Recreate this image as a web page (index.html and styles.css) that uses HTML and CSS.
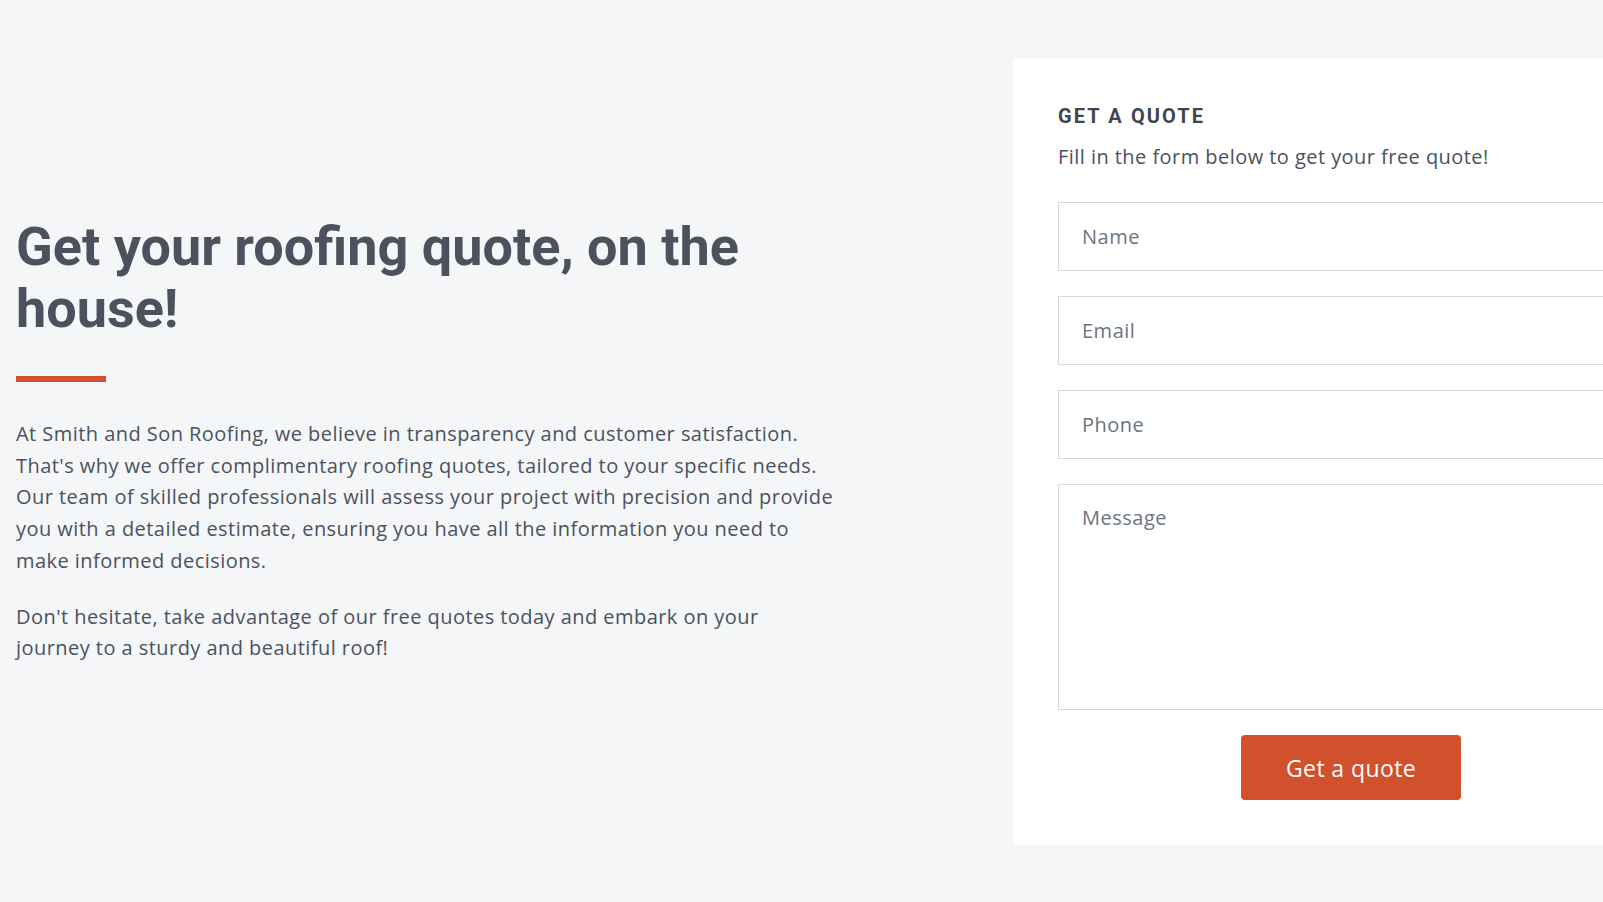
FILE: index.html
```html
<!DOCTYPE html>
<html lang="en">
<head>
<meta charset="utf-8">
<title>Get a quote</title>
<link rel="stylesheet" href="styles.css">
</head>
<body>
<main class="page">
  <section class="intro">
    <h1 class="intro-title">Get your roofing quote, on the house!</h1>
    <div class="accent"></div>
    <p class="intro-text">At Smith and Son Roofing, we believe in transparency and customer satisfaction. That's why we offer complimentary roofing quotes, tailored to your specific needs. Our team of skilled professionals will assess your project with precision and provide you with a detailed estimate, ensuring you have all the information you need to make informed decisions.</p>
    <p class="intro-text">Don't hesitate, take advantage of our free quotes today and embark on your journey to a sturdy and beautiful roof!</p>
  </section>
  <section class="card">
    <h2 class="card-title">GET A QUOTE</h2>
    <p class="card-sub">Fill in the form below to get your free quote!</p>
    <form class="form">
      <input class="field" type="text" placeholder="Name">
      <input class="field" type="email" placeholder="Email">
      <input class="field" type="tel" placeholder="Phone">
      <textarea class="field area" placeholder="Message"></textarea>
      <button class="btn" type="button">Get a quote</button>
    </form>
  </section>
</main>
</body>
</html>
```

FILE: styles.css
```css
html, body {
  margin: 0;
  padding: 0;
  background: #f5f6f8;
  overflow: hidden;
}

.page {
  display: flex;
  align-items: flex-start;
  gap: 178px;
  padding: 58px 0 0 16px;
  width: 1800px;
}

.intro {
  width: 819px;
  flex: none;
  padding-top: 158px;
}

.intro-title {
  font-family: Roboto, "Liberation Sans", sans-serif;
  font-weight: 700;
  font-size: 54px;
  line-height: 62px;
  color: #4c525d;
  margin: 0;
}

.accent {
  width: 90px;
  height: 6px;
  background: #d0512b;
  margin-top: 36px;
}

.intro-text {
  font-family: "Open Sans", "Liberation Sans", sans-serif;
  font-size: 20px;
  line-height: 31.7px;
  letter-spacing: 0.45px;
  color: #4a525e;
  margin: 36px 0 0;
}

.intro-text + .intro-text {
  margin-top: 24px;
}

.card {
  flex: none;
  width: 586px;
  background: #ffffff;
  padding: 46px 45px 45px;
}

.card-title {
  font-family: Roboto, "Liberation Sans", sans-serif;
  font-weight: 700;
  font-size: 20px;
  letter-spacing: 2.1px;
  line-height: 24px;
  color: #3e4650;
  margin: 0;
}

.card-sub {
  font-family: "Open Sans", "Liberation Sans", sans-serif;
  font-size: 20px;
  line-height: 28px;
  letter-spacing: 0.45px;
  color: #4a525e;
  margin: 15px 0 0;
}

.form {
  display: flex;
  flex-direction: column;
  gap: 25px;
  margin-top: 31px;
}

.field {
  box-sizing: border-box;
  width: 100%;
  height: 69px;
  border: 1px solid #d6d9dd;
  border-radius: 0;
  background: #fff;
  padding: 0 23px;
  font-family: "Open Sans", "Liberation Sans", sans-serif;
  font-size: 20px;
  letter-spacing: 0.5px;
  color: #4a525e;
  outline: none;
}

.field::placeholder {
  color: #6b7480;
}

.area {
  height: 226px;
  padding-top: 19px;
  resize: none;
  line-height: 28px;
}

.btn {
  align-self: center;
  margin-top: 0;
  height: 65px;
  padding: 0 45px;
  border: none;
  border-radius: 4px;
  background: #d0512b;
  color: #ffffff;
  font-family: "Open Sans", "Liberation Sans", sans-serif;
  font-size: 23px;
  letter-spacing: 0.4px;
}
```
